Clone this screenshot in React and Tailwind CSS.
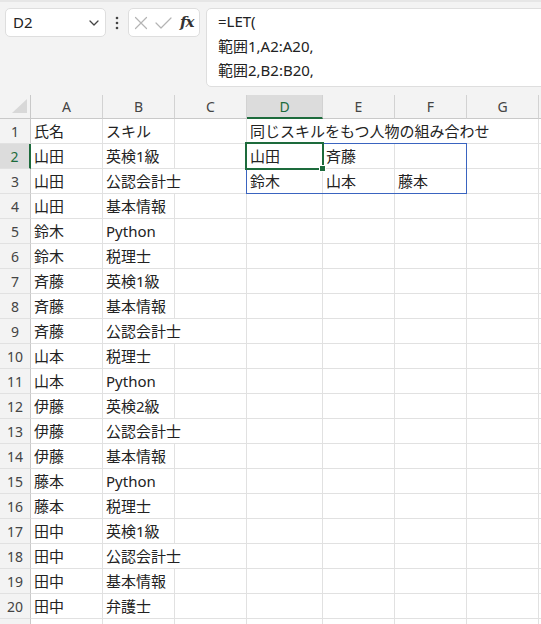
import React from "react";

const COLS = [
  { key: "A", w: 72 },
  { key: "B", w: 72 },
  { key: "C", w: 72 },
  { key: "D", w: 76 },
  { key: "E", w: 72 },
  { key: "F", w: 72 },
  { key: "G", w: 72 },
];

const ROWS = [
  ["氏名", "スキル", "", "同じスキルをもつ人物の組み合わせ"],
  ["山田", "英検1級", "", "山田", "斉藤"],
  ["山田", "公認会計士", "", "鈴木", "山本", "藤本"],
  ["山田", "基本情報"],
  ["鈴木", "Python"],
  ["鈴木", "税理士"],
  ["斉藤", "英検1級"],
  ["斉藤", "基本情報"],
  ["斉藤", "公認会計士"],
  ["山本", "税理士"],
  ["山本", "Python"],
  ["伊藤", "英検2級"],
  ["伊藤", "公認会計士"],
  ["伊藤", "基本情報"],
  ["藤本", "Python"],
  ["藤本", "税理士"],
  ["田中", "英検1級"],
  ["田中", "公認会計士"],
  ["田中", "基本情報"],
  ["田中", "弁護士"],
  [],
];

const FONT = "font-['Noto_Sans','Noto_Sans_CJK_JP',sans-serif]";

function Chevron() {
  return (
    <svg width="10" height="6" viewBox="0 0 10 6" fill="none">
      <path d="M1 1l4 4 4-4" stroke="#444" strokeWidth="1.3" strokeLinecap="round" strokeLinejoin="round" />
    </svg>
  );
}

function Kebab() {
  return (
    <svg width="4" height="14" viewBox="0 0 4 14">
      <circle cx="2" cy="2" r="1.3" fill="#444" />
      <circle cx="2" cy="7" r="1.3" fill="#444" />
      <circle cx="2" cy="12" r="1.3" fill="#444" />
    </svg>
  );
}

function Cross() {
  return (
    <svg width="14" height="14" viewBox="0 0 14 14" fill="none">
      <path d="M1.5 1.5l11 11M12.5 1.5l-11 11" stroke="#b4b4b4" strokeWidth="1.2" strokeLinecap="round" />
    </svg>
  );
}

function Check() {
  return (
    <svg width="17" height="12" viewBox="0 0 17 12" fill="none">
      <path d="M1 6l5 5L16 1" stroke="#b4b4b4" strokeWidth="1.2" strokeLinecap="round" strokeLinejoin="round" />
    </svg>
  );
}

function FormulaBar() {
  return (
    <div className="h-[95px] bg-[#f3f3f3] border-t-[2px] border-[#e6e6e6]">
      <div className="flex items-start pt-[6px] pl-[5px]">
        {/* name box */}
        <div className="w-[101px] h-[29px] bg-white border border-[#dedede] rounded-[5px] flex items-center justify-between pl-[7px] pr-[6px]">
          <span className="text-[15px] text-[#222]">D2</span>
          <Chevron />
        </div>
        <div className="w-[22px] h-[29px] flex items-center justify-center">
          <Kebab />
        </div>
        {/* cancel / enter / insert function */}
        <div className="w-[72px] h-[29px] bg-white border border-[#dedede] rounded-[5px] flex items-center pl-[5px] gap-[7px]">
          <Cross />
          <Check />
          <span className="font-['DejaVu_Serif',serif] italic font-semibold text-[15px] text-[#333] tracking-[-1px] ml-[1px]">
            fx
          </span>
        </div>
        {/* formula text */}
        <div className="flex-1 ml-[6px] mr-[-8px] h-[79px] bg-white border border-[#dedede] rounded-[5px] pl-[11px] text-[15px] leading-[24.5px] text-[#222]">
          <div>=LET(</div>
          <div>範囲1,A2:A20,</div>
          <div>範囲2,B2:B20,</div>
        </div>
      </div>
    </div>
  );
}

function HeaderRow() {
  return (
    <div className="flex h-[24px]">
      <div className="relative w-[31px] h-full shrink-0 bg-[#f3f3f3] border-r border-b border-[#c9c9c9]">
        <svg className="absolute left-[12px] top-[4px]" width="16" height="14" viewBox="0 0 16 14">
          <path d="M15 0L15 14L0 14Z" fill="#d8d8d8" />
        </svg>
      </div>
      {COLS.map((c) => {
        const sel = c.key === "D";
        return (
          <div
            key={c.key}
            style={{ width: c.w }}
            className={
              sel
                ? "h-full shrink-0 flex items-center justify-center bg-[#dcdcdc] border-r border-[#d2d2d2] border-b-2 border-b-[#1d6b3c] text-[14px] text-[#1d6b3c]"
                : "h-full shrink-0 flex items-center justify-center bg-[#f3f3f3] border-r border-b border-[#d2d2d2] border-b-[#c9c9c9] text-[14px] text-[#444]"
            }
          >
            {c.key}
          </div>
        );
      })}
      <div className="flex-1 h-full bg-[#f3f3f3] border-b border-[#c9c9c9]" />
    </div>
  );
}

function DataRow({ n, cells }) {
  const sel = n === 2;
  return (
    <div className="flex h-[25px]">
      <div
        className={
          sel
            ? "w-[31px] h-full shrink-0 flex items-center justify-center bg-[#dcdcdc] border-r-2 border-r-[#1d6b3c] border-b border-b-[#e1e1e1] text-[14px] text-[#1d6b3c]"
            : "w-[31px] h-full shrink-0 flex items-center justify-center bg-[#f3f3f3] border-r border-r-[#c9c9c9] border-b border-b-[#e1e1e1] text-[14px] text-[#444]"
        }
      >
        {n <= 20 ? n : ""}
      </div>
      {COLS.map((c, i) => {
        const text = cells[i] || "";
        // text running into an empty neighbour hides the gridline it crosses
        const runsOver =
          (n === 1 && (i === 3 || i === 4 || i === 5)) ||
          (i === 1 && text === "公認会計士");
        return (
          <div
            key={c.key}
            style={{ width: c.w }}
            className={
              runsOver
                ? "relative z-10 h-full shrink-0 flex items-center pl-[3px] whitespace-nowrap overflow-visible border-b border-[#e1e1e1] text-[15px] text-[#222]"
                : "h-full shrink-0 flex items-center pl-[3px] whitespace-nowrap overflow-visible border-r border-b border-[#e1e1e1] text-[15px] text-[#222]"
            }
          >
            {text}
          </div>
        );
      })}
      <div className="flex-1 h-full border-b border-[#e1e1e1]" />
    </div>
  );
}

export default function App() {
  return (
    <div className={`w-[541px] h-[624px] overflow-hidden bg-white ${FONT}`}>
      <FormulaBar />
      <div className="relative">
        <HeaderRow />
        {ROWS.map((cells, i) => (
          <DataRow key={i} n={i + 1} cells={cells} />
        ))}
        {/* spill range D2:F3 */}
        <div className="absolute z-20 left-[246px] top-[48px] w-[221px] h-[51px] border border-[#3a64c0] pointer-events-none" />
        {/* active cell D2 */}
        <div className="absolute z-20 left-[245px] top-[47px] w-[79px] h-[28px] border-2 border-[#1d6b3c] pointer-events-none" />
        {/* fill handle */}
        <div className="absolute z-20 left-[319px] top-[70px] w-[7px] h-[7px] bg-[#1d6b3c] border border-white" />
      </div>
    </div>
  );
}
